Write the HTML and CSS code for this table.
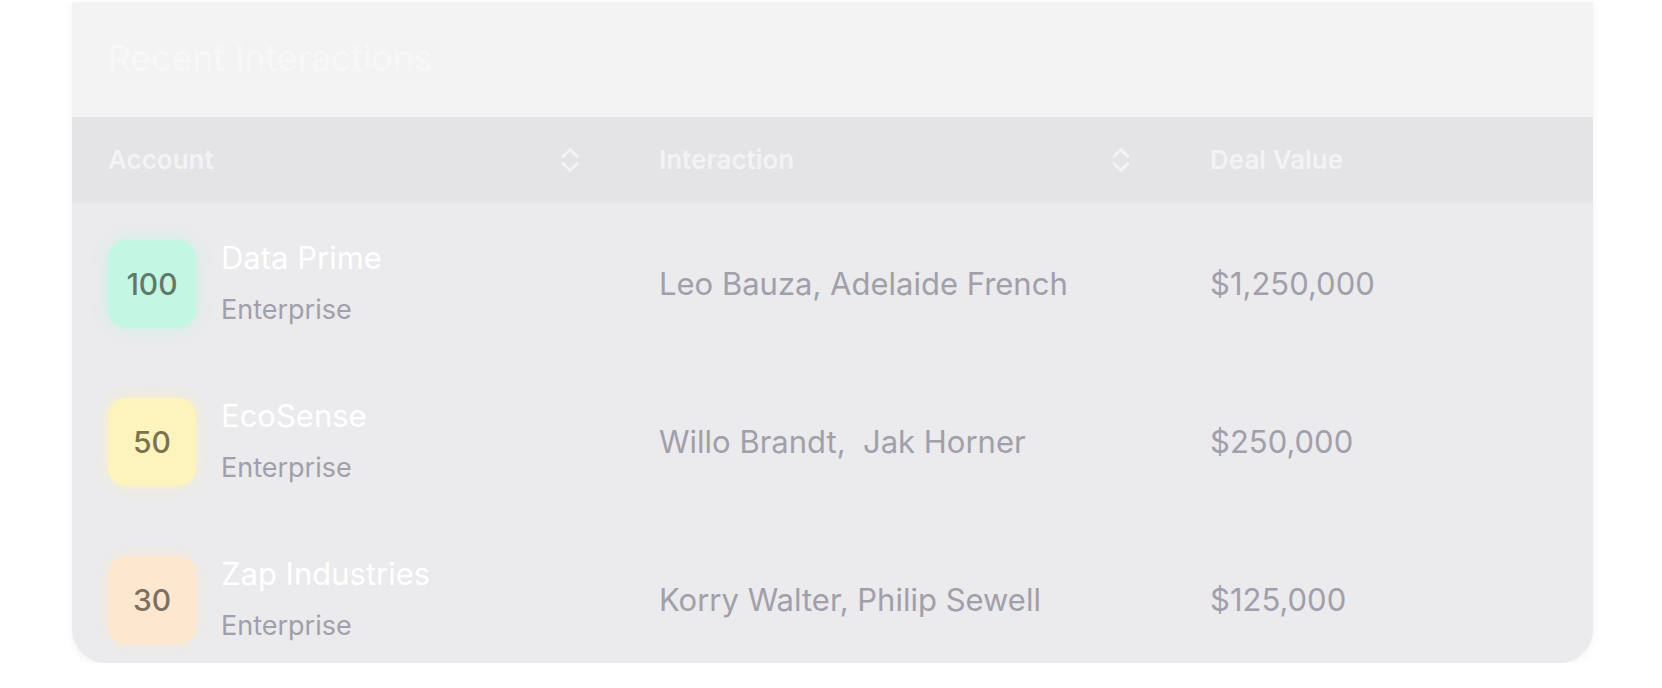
FILE: index.html
```html
<!DOCTYPE html>
<html lang="en">
<head>
<meta charset="utf-8">
<title>Recent Interactions</title>
<link rel="stylesheet" href="styles.css">
</head>
<body>
<div class="page">
  <section class="card">
    <header class="card-head">
      <h2 class="title">Recent Interactions</h2>
    </header>
    <div class="thead">
      <div class="th">
        <span>Account</span>
        <svg class="sort" viewBox="0 0 20 28" width="20" height="28" fill="none" stroke="currentColor" stroke-width="2.6" stroke-linecap="round" stroke-linejoin="round"><path d="M3 10.5l7-7 7 7"/><path d="M3 17.5l7 7 7-7"/></svg>
      </div>
      <div class="th">
        <span>Interaction</span>
        <svg class="sort" viewBox="0 0 20 28" width="20" height="28" fill="none" stroke="currentColor" stroke-width="2.6" stroke-linecap="round" stroke-linejoin="round"><path d="M3 10.5l7-7 7 7"/><path d="M3 17.5l7 7 7-7"/></svg>
      </div>
      <div class="th"><span>Deal Value</span></div>
    </div>
    <div class="tbody">
      <div class="tr">
        <div class="td account">
          <div class="badge badge-green">100</div>
          <div class="acct-text">
            <div class="acct-name">Data Prime</div>
            <div class="acct-type">Enterprise</div>
          </div>
        </div>
        <div class="td muted">Leo Bauza, Adelaide French</div>
        <div class="td muted">$1,250,000</div>
      </div>
      <div class="tr">
        <div class="td account">
          <div class="badge badge-yellow">50</div>
          <div class="acct-text">
            <div class="acct-name">EcoSense</div>
            <div class="acct-type">Enterprise</div>
          </div>
        </div>
        <div class="td muted">Willo Brandt,&nbsp; Jak Horner</div>
        <div class="td muted">$250,000</div>
      </div>
      <div class="tr">
        <div class="td account">
          <div class="badge badge-orange">30</div>
          <div class="acct-text">
            <div class="acct-name">Zap Industries</div>
            <div class="acct-type">Enterprise</div>
          </div>
        </div>
        <div class="td muted">Korry Walter, Philip Sewell</div>
        <div class="td muted">$125,000</div>
      </div>
    </div>
  </section>
</div>
</body>
</html>
```

FILE: styles.css
```css
* { box-sizing: border-box; }

html, body {
  margin: 0;
  padding: 0;
  background: #ffffff;
  font-family: Inter, "Noto Sans", "Liberation Sans", sans-serif;
}

.page {
  padding: 2px 69px 0 72px;
}

.card {
  width: 1521px;
  height: 661px;
  background: #ebeaed;
  border-radius: 0 0 34px 34px;
  overflow: hidden;
  box-shadow: 0 2px 8px rgba(0, 0, 0, 0.06);
}

.card-head {
  height: 115px;
  background: #f3f3f4;
  display: flex;
  align-items: center;
  padding-left: 36px;
  padding-bottom: 4px;
}

.title {
  margin: 0;
  font-size: 36px;
  font-weight: 400;
  color: #f7f7f8;
  letter-spacing: -0.2px;
}

.thead {
  display: grid;
  grid-template-columns: 551px 551px 1fr;
  height: 88px;
  background: #e4e3e6;
  border-bottom: 3px solid #e9e8eb;
}

.th {
  display: flex;
  align-items: center;
  justify-content: space-between;
  padding: 0 43px 0 36px;
  font-size: 26px;
  font-weight: 600;
  color: #f3f3f4;
}

.sort {
  color: #f4f4f5;
  display: block;
}

.tr {
  display: grid;
  grid-template-columns: 551px 551px 1fr;
  height: 158px;
  align-items: center;
  border-bottom: 1px solid #edecef;
}

.td {
  padding-left: 36px;
}

.muted {
  font-size: 31px;
  color: #a1a0aa;
}

.account {
  display: flex;
  align-items: center;
  gap: 25px;
}

.badge {
  width: 88px;
  height: 88px;
  border-radius: 18px;
  display: flex;
  align-items: center;
  justify-content: center;
  font-size: 30px;
  font-weight: 500;
}

.badge-green {
  background: #c3f6e3;
  color: #5f7a6d;
  box-shadow: 0 0 16px rgba(195, 246, 227, 0.8);
}

.badge-yellow {
  background: #fdf3bd;
  color: #78724f;
  box-shadow: 0 0 16px rgba(253, 243, 189, 0.8);
}

.badge-orange {
  background: #fde8cf;
  color: #7f6f63;
  box-shadow: 0 0 16px rgba(253, 232, 207, 0.8);
}

.acct-text {
  display: flex;
  flex-direction: column;
  gap: 18px;
  padding-bottom: 2px;
}

.acct-name {
  font-size: 31px;
  line-height: 36px;
  color: #ffffff;
}

.acct-type {
  font-size: 27px;
  line-height: 32px;
  color: #a1a0aa;
}
```
